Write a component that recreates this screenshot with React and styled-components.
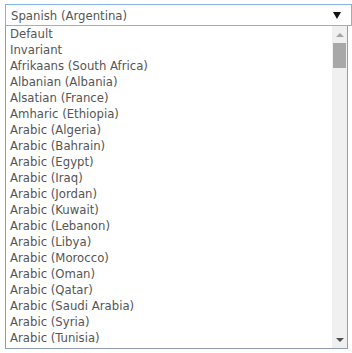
import React from 'react'
import styled, { createGlobalStyle } from 'styled-components'

const GlobalStyle = createGlobalStyle`
  html, body {
    margin: 0;
    padding: 0;
    background: #fff;
  }
  body {
    font-family: "DejaVu Sans Condensed", "DejaVu Sans", sans-serif;
  }
`

const languages = [
  'Default',
  'Invariant',
  'Afrikaans (South Africa)',
  'Albanian (Albania)',
  'Alsatian (France)',
  'Amharic (Ethiopia)',
  'Arabic (Algeria)',
  'Arabic (Bahrain)',
  'Arabic (Egypt)',
  'Arabic (Iraq)',
  'Arabic (Jordan)',
  'Arabic (Kuwait)',
  'Arabic (Lebanon)',
  'Arabic (Libya)',
  'Arabic (Morocco)',
  'Arabic (Oman)',
  'Arabic (Qatar)',
  'Arabic (Saudi Arabia)',
  'Arabic (Syria)',
  'Arabic (Tunisia)',
]

const Page = styled.div`
  padding: 4px 0 0 5px;
  width: 352px;
  box-sizing: border-box;
`

const SelectBox = styled.div`
  width: 347px;
  height: 22px;
  box-sizing: border-box;
  border: 1px solid #86b3e3;
  display: flex;
  align-items: center;
  justify-content: space-between;
  padding: 0 10px 0 5px;
  font-size: 13px;
  color: #555;
`

const Caret = styled.span`
  width: 0;
  height: 0;
  border-left: 4px solid transparent;
  border-right: 4px solid transparent;
  border-top: 7px solid #111;
`

const ListBox = styled.div`
  width: 343px;
  height: 323px;
  box-sizing: border-box;
  border: 1px solid #8d9db3;
  border-top: none;
  display: flex;
`

const Options = styled.ul`
  list-style: none;
  margin: 0;
  padding: 0;
  flex: 1;
  overflow: hidden;
`

const Option = styled.li`
  height: 16px;
  line-height: 16px;
  padding-left: 4px;
  font-size: 13px;
  color: #555;
  white-space: nowrap;
`

const ScrollBar = styled.div`
  width: 15px;
  background: #f0f0f0;
  display: flex;
  flex-direction: column;
  align-items: center;
`

const ArrowBtn = styled.div`
  height: 17px;
  display: flex;
  align-items: center;
  justify-content: center;
`

const Arrow = styled.span`
  width: 0;
  height: 0;
  border-left: 4px solid transparent;
  border-right: 4px solid transparent;
  ${p => (p.up ? 'border-bottom: 4px solid #a3a3a3;' : 'border-top: 4px solid #505050;')}
`

const Track = styled.div`
  flex: 1;
  width: 100%;
  padding: 0 1px;
  box-sizing: border-box;
`

const Thumb = styled.div`
  height: 25px;
  background: #a8a8a8;
`

export default function App() {
  return (
    <Page>
      <GlobalStyle />
      <SelectBox>
        <span>Spanish (Argentina)</span>
        <Caret />
      </SelectBox>
      <ListBox>
        <Options>
          {languages.map(l => (
            <Option key={l}>{l}</Option>
          ))}
        </Options>
        <ScrollBar>
          <ArrowBtn>
            <Arrow up />
          </ArrowBtn>
          <Track>
            <Thumb />
          </Track>
          <ArrowBtn>
            <Arrow />
          </ArrowBtn>
        </ScrollBar>
      </ListBox>
    </Page>
  )
}
